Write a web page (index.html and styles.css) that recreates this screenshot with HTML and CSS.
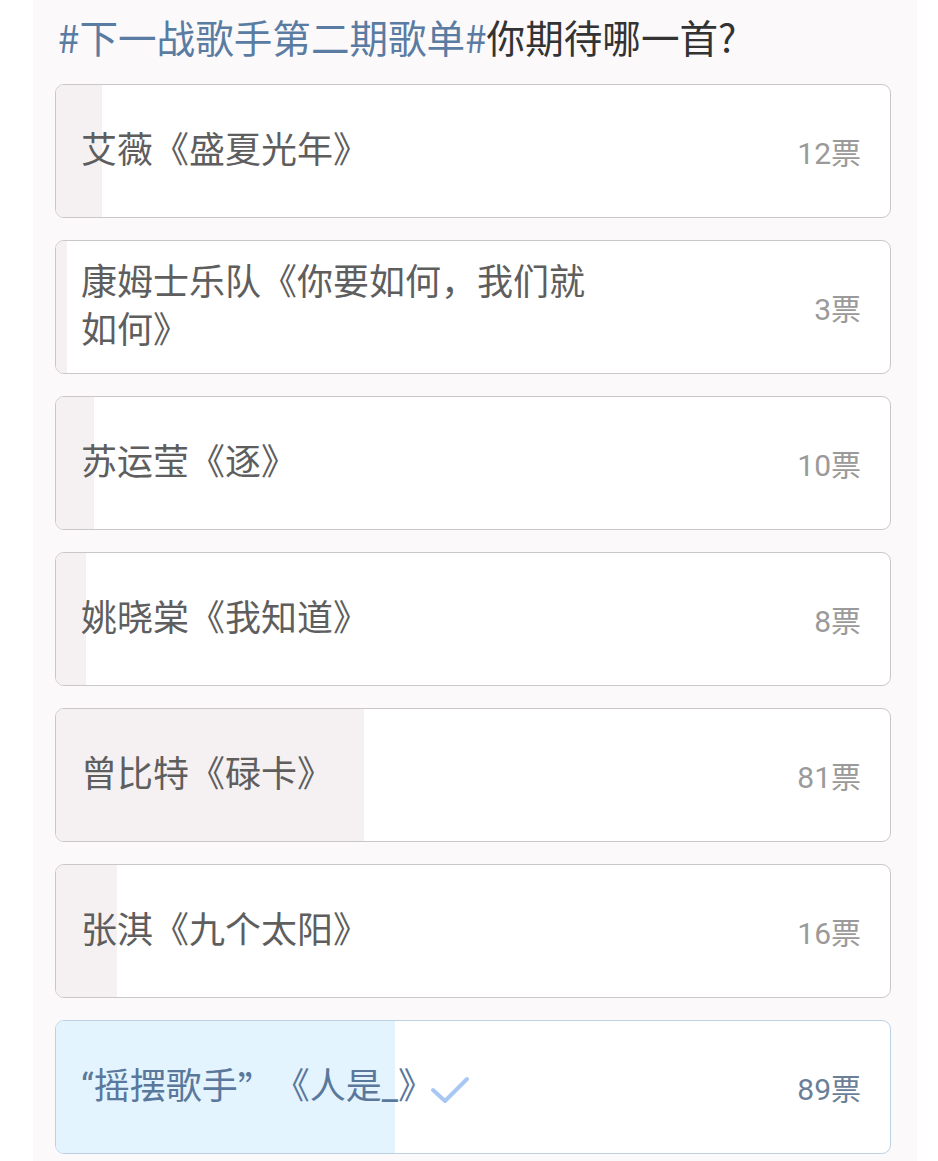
FILE: index.html
```html
<!DOCTYPE html>
<html lang="zh-CN">
<head>
<meta charset="utf-8">
<link rel="stylesheet" href="styles.css">
</head>
<body>
<div class="panel">
  <h1 class="title"><span class="topic">#下一战歌手第二期歌单#</span>你期待哪一首?</h1>
  <ul class="options">
    <li class="option">
      <div class="fill" style="width:5.48%"></div>
      <span class="label">艾薇《盛夏光年》</span>
      <span class="count">12票</span>
    </li>
    <li class="option">
      <div class="fill" style="width:1.37%"></div>
      <span class="label">康姆士乐队《你要如何，我们就如何》</span>
      <span class="count">3票</span>
    </li>
    <li class="option">
      <div class="fill" style="width:4.57%"></div>
      <span class="label">苏运莹《逐》</span>
      <span class="count">10票</span>
    </li>
    <li class="option">
      <div class="fill" style="width:3.65%"></div>
      <span class="label">姚晓棠《我知道》</span>
      <span class="count">8票</span>
    </li>
    <li class="option">
      <div class="fill" style="width:36.99%"></div>
      <span class="label">曾比特《碌卡》</span>
      <span class="count">81票</span>
    </li>
    <li class="option">
      <div class="fill" style="width:7.31%"></div>
      <span class="label">张淇《九个太阳》</span>
      <span class="count">16票</span>
    </li>
    <li class="option selected">
      <div class="fill" style="width:40.64%"></div>
      <span class="label">“摇摆歌手<span class="cjk">”</span>《人是_》<svg class="check" viewBox="0 0 40 30" width="40" height="30"><path d="M3 15 L15 26 L37 4" fill="none" stroke="#a9c7f3" stroke-width="4" stroke-linecap="round" stroke-linejoin="round"/></svg></span>
      <span class="count">89票</span>
    </li>
  </ul>
</div>
</body>
</html>
```

FILE: styles.css
```css
html, body {
  margin: 0;
  padding: 0;
  background: #ffffff;
}
body {
  font-family: "Noto Sans CJK SC", "Noto Sans", sans-serif;
}
.panel {
  margin: 0 21px 0 33px;
  background: #fcf9fb;
  padding: 8px 26px 10px 22px;
  min-height: 1143px;
}
.title {
  margin: 0 0 20px 3px;
  font-size: 38.6px;
  line-height: 56px;
  font-weight: 400;
  color: #333333;
}
.topic {
  color: #5a7ca2;
}
.options {
  list-style: none;
  margin: 0;
  padding: 0;
  display: flex;
  flex-direction: column;
  gap: 22px;
}
.option {
  position: relative;
  box-sizing: border-box;
  height: 134px;
  border: 1.5px solid #c9c7cb;
  border-radius: 9px;
  background: #ffffff;
  overflow: hidden;
  display: flex;
  align-items: center;
  justify-content: space-between;
  padding: 0 29px 0 25px;
}
.fill {
  position: absolute;
  left: 0;
  top: 0;
  bottom: 0;
  background: #f5f1f3;
}
.label {
  position: relative;
  max-width: 535px;
  font-family: Roboto, "Noto Sans CJK SC", sans-serif;
  font-size: 36px;
  line-height: 48px;
  color: #5e5e5e;
  display: flex;
  align-items: center;
  flex-wrap: wrap;
}
.cjk {
  font-family: "Noto Sans CJK SC", sans-serif;
}
.count {
  position: relative;
  font-family: Roboto, "Noto Sans CJK SC", sans-serif;
  font-size: 30px;
  color: #9a9a9a;
}
.selected {
  border-color: #bdd0e3;
}
.selected .fill {
  background: #e3f4fe;
}
.selected .label {
  color: #5a789c;
}
.selected .count {
  color: #6b7f98;
}
.check {
  margin-left: -4px;
  margin-top: 6px;
}
```
